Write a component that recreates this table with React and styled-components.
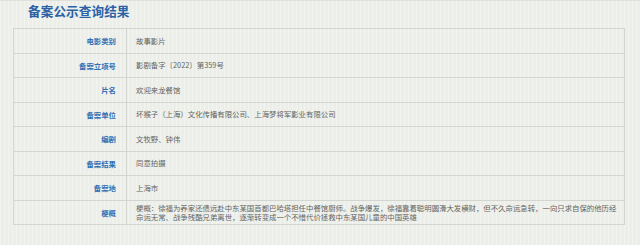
import React from "react";
import styled, { createGlobalStyle } from "styled-components";

const Global = createGlobalStyle`
    html, body {
        margin: 0;
        padding: 0;
        background-color: #edefea;
    }
    body {
        font-family: "Noto Sans CJK SC", "Liberation Sans", sans-serif;
    }
`

const Page = styled.div`
    width: 640px;
    height: 245px;
    box-sizing: border-box;
    border-top: 1px solid #dfe1dc;
    background-color: #edefea;
    background-image: repeating-linear-gradient(
        90deg,
        rgba(255, 255, 255, 0.25) 0px,
        rgba(255, 255, 255, 0.25) 1px,
        rgba(0, 0, 0, 0.012) 2px,
        rgba(0, 0, 0, 0) 4px
    );
`

const Title = styled.h2`
    margin: 0;
    padding-left: 28px;
    height: 27px;
    line-height: 20px;
    font-size: 12.6px;
    font-weight: bold;
    color: #2a62a6;
    letter-spacing: 0.1px;
`

const Table = styled.div`
    margin-left: 13px;
    width: 610px;
    border: 1px solid #d3d6d0;
    border-bottom: none;
    display: grid;
    grid-template-columns: 113px 1fr;
    grid-auto-rows: 24.5px;
`

const Row = styled.div`
    display: contents;
`

const Label = styled.div`
    box-sizing: border-box;
    border-right: 1px solid #d3d6d0;
    border-bottom: 1px solid #d3d6d0;
    display: flex;
    align-items: center;
    justify-content: flex-end;
    padding-right: 10px;
    font-size: 7.4px;
    font-weight: bold;
    color: #3470b5;
`

const Value = styled.div`
    box-sizing: border-box;
    border-bottom: 1px solid #d3d6d0;
    display: flex;
    align-items: center;
    padding: 0 4px 0 9px;
    font-size: 7.4px;
    line-height: ${(p) => (p.multi ? "9.4px" : "10px")};
    color: #636562;
`

const rows = [
    ["电影类别", "故事影片"],
    ["备案立项号", "影剧备字〔2022〕第359号"],
    ["片名", "欢迎来龙餐馆"],
    ["备案单位", "坏猴子（上海）文化传播有限公司、上海梦将军影业有限公司"],
    ["编剧", "文牧野、钟伟"],
    ["备案结果", "同意拍摄"],
    ["备案地", "上海市"],
    [
        "梗概",
        "梗概：徐福为养家还债远赴中东某国首都巴哈塔担任中餐馆厨师。战争爆发，徐福靠着聪明圆滑大发横财，但不久命运急转，一向只求自保的他历经命运无常、战争残酷兄弟离世，逐渐转变成一个不惜代价拯救中东某国儿童的中国英雄",
        true,
    ],
]

const App = () => {
    return (
        <Page>
            <Global />
            <Title>备案公示查询结果</Title>
            <Table>
                {rows.map(([label, value, multi]) => (
                    <Row key={label}>
                        <Label>{label}</Label>
                        <Value multi={multi}>{value}</Value>
                    </Row>
                ))}
            </Table>
        </Page>
    )
}

export default App;
